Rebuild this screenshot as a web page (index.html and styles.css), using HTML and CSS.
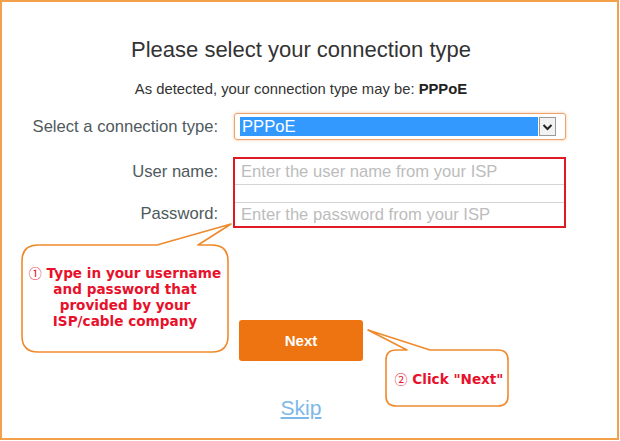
FILE: index.html
```html
<!DOCTYPE html>
<html>
<head>
<meta charset="utf-8">
<link rel="stylesheet" href="styles.css">
</head>
<body>
<div class="frame">
  <div class="content">
    <h1 class="title">Please select your connection type</h1>
    <p class="detected">As detected, your connection type may be: <b>PPPoE</b></p>
    <div class="row row-select">
      <div class="label">Select a connection type:</div>
      <div class="select">
        <div class="sel-value">PPPoE</div>
        <div class="sel-arrow">
          <svg width="11" height="8" viewBox="0 0 11 8"><path d="M1.5 2 L5.5 6 L9.5 2" fill="none" stroke="#222" stroke-width="2"/></svg>
        </div>
      </div>
    </div>
    <div class="row row-creds">
      <div class="labels">
        <div class="label l-user">User name:</div>
        <div class="l-gap"></div>
        <div class="label l-pass">Password:</div>
      </div>
      <div class="redbox">
        <div class="input in-user">Enter the user name from your ISP</div>
        <div class="in-gap"></div>
        <div class="input in-pass">Enter the password from your ISP</div>
      </div>
    </div>
    <button class="next">Next</button>
    <a class="skip" href="#">Skip</a>
  </div>

  <svg class="callouts" width="620" height="441" viewBox="0 0 620 441">
    <path d="M38 245 L157 245 L231 224 L198 245 L212 245 Q228 245 228 261 L228 336 Q228 352 212 352 L38 352 Q22 352 22 336 L22 261 Q22 245 38 245 Z" fill="#fff" stroke="#ef8a2c" stroke-width="1.6" stroke-linejoin="round"/>
    <path d="M397 350 L407 350 L368 330 L430 350 L498 350 Q508 350 508 360 L508 396 Q508 406 498 406 L396 406 Q386 406 386 396 L386 360 Q386 350 396 350 Z" fill="#fff" stroke="#ef8a2c" stroke-width="1.6" stroke-linejoin="round"/>
  </svg>
  <div class="note note1"><span class="num">①</span> Type in your username<br>and password that<br>provided by your<br>ISP/cable company</div>
  <div class="note note2"><span class="num">②</span> Click "Next"</div>
</div>
</body>
</html>
```

FILE: styles.css
```css
html, body {
  margin: 0;
  padding: 0;
  background: #fff;
}
.frame {
  position: relative;
  width: 619px;
  height: 440px;
  box-sizing: border-box;
  border: 2px solid #f3a04c;
  background: #fff;
  font-family: "Liberation Sans", Arial, sans-serif;
  overflow: hidden;
}
.content {
  display: flex;
  flex-direction: column;
  align-items: center;
  padding-top: 36px;
  padding-right: 17px;
}
.title {
  margin: 0;
  font-size: 22px;
  line-height: 24px;
  font-weight: normal;
  color: #333;
}
.detected {
  margin: 18px 0 0;
  font-size: 14.8px;
  line-height: 18px;
  color: #333;
}
.detected b {
  color: #222;
}
.row {
  display: flex;
  align-self: flex-start;
  width: 564px;
  column-gap: 16px;
}
.row-select {
  margin-top: 15px;
  align-items: center;
}
.label {
  width: 216px;
  text-align: right;
  font-size: 16.6px;
  color: #4e5a5c;
}
.select {
  width: 332px;
  height: 27px;
  box-sizing: border-box;
  border: 1px solid #eaa36e;
  border-radius: 3px;
  box-shadow: 0 0 3px rgba(240, 140, 60, 0.55);
  padding: 3px 9px 3px 5px;
  display: flex;
  gap: 1px;
}
.sel-value {
  flex: 1;
  background: #3399ff;
  color: #fff;
  font-size: 16.6px;
  line-height: 19px;
  padding-left: 2px;
}
.sel-arrow {
  width: 17px;
  box-sizing: border-box;
  border: 1px solid #9a9a9a;
  background: #f2f2f2;
  display: flex;
  align-items: center;
  justify-content: center;
}
.row-creds {
  margin-top: 17px;
}
.labels {
  display: flex;
  flex-direction: column;
  padding-top: 2px;
}
.l-user {
  height: 26px;
  line-height: 26px;
}
.l-gap {
  height: 17px;
}
.l-pass {
  height: 24px;
  line-height: 24px;
}
.redbox {
  width: 334px;
  margin-left: -1px;
  height: 71px;
  box-sizing: border-box;
  border: 2px solid #de1a24;
  display: flex;
  flex-direction: column;
}
.input {
  color: #bcbcbc;
  font-size: 16.6px;
  padding-left: 6px;
}
.in-user {
  height: 26px;
  line-height: 25px;
  border-bottom: 1px solid #d4d4d4;
  box-sizing: border-box;
}
.in-gap {
  height: 17px;
}
.in-pass {
  height: 24px;
  line-height: 23px;
  border-top: 1px solid #d4d4d4;
  box-sizing: border-box;
}
.next {
  margin-top: 92px;
  width: 124px;
  height: 41px;
  border: none;
  border-radius: 3px;
  background: #ee7311;
  color: #fff;
  font-family: "Liberation Sans", Arial, sans-serif;
  font-weight: bold;
  font-size: 15px;
  cursor: pointer;
}
.skip {
  margin-top: 35px;
  font-size: 21px;
  line-height: 24px;
  color: #7cb9e8;
  text-decoration: underline;
}
.callouts {
  position: absolute;
  left: -2px;
  top: -2px;
}
.note {
  position: absolute;
  font-family: "DejaVu Sans", Verdana, sans-serif;
  font-weight: bold;
  font-size: 13.6px;
  line-height: 16px;
  color: #e8112b;
  text-align: center;
}
.num {
  font-family: "Noto Sans CJK SC", "DejaVu Sans", sans-serif;
  font-weight: normal;
  font-size: 13px;
}
.note1 {
  left: 20px;
  top: 263px;
  width: 206px;
}
.note2 {
  left: 387px;
  top: 369px;
  width: 120px;
}
```
